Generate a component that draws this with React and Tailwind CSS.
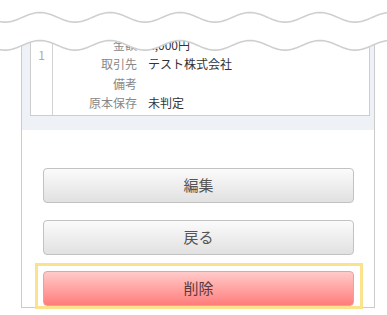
import React from 'react';

// sine-ish wave used for the "cut" at the top of the screenshot
function wavePoints(mid) {
  const pts = [];
  for (let x = -4; x <= 392; x += 2) {
    const y = mid - 4.8 * Math.cos((2 * Math.PI * (x - 40)) / 70);
    pts.push([x, y.toFixed(2)]);
  }
  return pts;
}

function CutWave() {
  const top = wavePoints(17.3);
  const bottom = wavePoints(45.3);
  const line = (pts) => 'M' + pts.map((p) => p.join(',')).join(' L');
  const fill = line(bottom) + ' L392,0 L-4,0 Z';
  return (
    <svg className="absolute left-0 top-0" width="387" height="60" viewBox="0 0 387 60">
      <path d={fill} fill="#ffffff" />
      <path d={line(top)} fill="none" stroke="#cfcfcf" strokeWidth="1.6" />
      <path d={line(bottom)} fill="none" stroke="#cfcfcf" strokeWidth="1.6" />
    </svg>
  );
}

const rows = [
  { label: '金額', value: '1,000円' },
  { label: '取引先', value: 'テスト株式会社' },
  { label: '備考', value: '' },
  { label: '原本保存', value: '未判定' },
];

function Button({ children, danger }) {
  return (
    <div
      className={
        'flex h-[35px] w-[311px] items-center justify-center rounded-[4px] border text-[15px] ' +
        (danger
          ? 'border-[#e3a3a3] bg-gradient-to-b from-[#ffcaca] to-[#ff7c7c] text-[#5c3a3a]'
          : 'border-[#c2c2c2] bg-gradient-to-b from-[#fbfbfb] to-[#e1e1e1] text-[#555555]')
      }
    >
      {children}
    </div>
  );
}

export default function App() {
  return (
    <div
      className="relative h-[315px] w-[387px] overflow-hidden bg-white"
      style={{ fontFamily: '"Noto Sans CJK JP", "Noto Sans", sans-serif' }}
    >
      {/* phone frame */}
      <div className="ml-[21px] h-[308px] w-[354px] border-x border-b border-[#cbcbcb]">
        {/* detail table area */}
        <div className="bg-[#eef2f7] pb-[14px] pl-[8px] pr-[4px] pt-[34px]">
          <div className="flex border border-[#cdcdcd] bg-white">
            <div className="w-[22px] border-r border-[#d2d2d2] pt-[12px] text-center text-[12px] leading-[16px] text-[#aaaaaa]">
              1
            </div>
            <div className="flex-1 pb-[2px]">
              {rows.map((r) => (
                <div key={r.label} className="flex h-[19.5px] items-center text-[12px]">
                  <span className="w-[84px] text-right text-[#888888]">{r.label}</span>
                  <span className="ml-[11px] text-[#333333]">{r.value}</span>
                </div>
              ))}
            </div>
          </div>
        </div>

        {/* actions */}
        <div className="flex flex-col gap-[16.5px] pl-[21px] pt-[38px]">
          <Button>編集</Button>
          <Button>戻る</Button>
          <div className="relative">
            <Button danger>削除</Button>
            <div className="absolute left-[-8px] top-[-8px] h-[46px] w-[328px] border-[3px] border-[#fbe28c]" />
          </div>
        </div>
      </div>

      <CutWave />
    </div>
  );
}
